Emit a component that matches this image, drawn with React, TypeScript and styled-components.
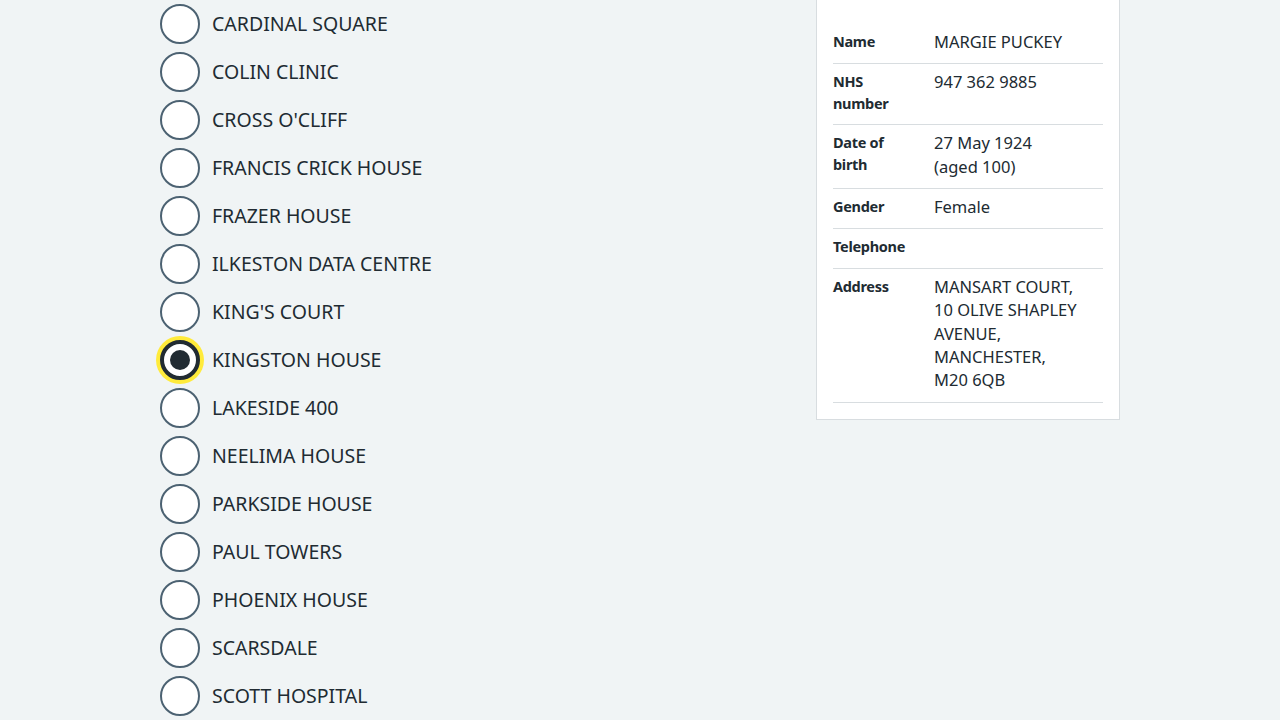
import React from "react";
import styled, { createGlobalStyle } from "styled-components";

const GlobalStyle = createGlobalStyle`
  html, body {
    margin: 0;
    padding: 0;
    background: #f0f4f5;
    color: #212b32;
    font-family: "Noto Sans", "Liberation Sans", Arial, sans-serif;
    overflow: hidden;
  }
  * { box-sizing: border-box; }
`;

const Page = styled.main`
  width: 960px;
  margin: 4px auto 0;
  display: grid;
  grid-template-columns: 640px 304px;
  column-gap: 16px;
  align-items: start;
`;

const RadioList = styled.div`
  display: flex;
  flex-direction: column;
  gap: 8px;
`;

const RadioItem = styled.label`
  display: flex;
  align-items: center;
  gap: 12px;
  height: 40px;
  cursor: pointer;
`;

const RadioCircle = styled.span<{ $checked?: boolean }>`
  position: relative;
  flex: none;
  width: 40px;
  height: 40px;
  border-radius: 50%;
  background: #ffffff;
  border: ${(p) => (p.$checked ? "4px solid #212b32" : "2px solid #4c6272")};
  box-shadow: ${(p) => (p.$checked ? "0 0 0 4px #ffeb3b" : "none")};

  &::after {
    content: "";
    display: ${(p) => (p.$checked ? "block" : "none")};
    position: absolute;
    left: 6px;
    top: 6px;
    width: 20px;
    height: 20px;
    border-radius: 50%;
    background: #212b32;
  }
`;

const RadioLabel = styled.span`
  font-size: 19.5px;
  line-height: 28px;
  margin-top: -1px;
  color: #212b32;
`;

const Card = styled.aside`
  margin-top: -48px;
  background: #ffffff;
  border: 1px solid #d8dde0;
  padding: 67px 16px 16px;
`;

const SummaryList = styled.dl`
  margin: 0;
  display: flex;
  flex-direction: column;
`;

const Row = styled.div`
  display: flex;
  border-bottom: 1px solid #d8dde0;
  padding: 6px 0 10px;
  min-height: 40px;
`;

const Key = styled.dt`
  flex: none;
  width: 101px;
  padding-right: 19px;
  font-size: 14.5px;
  font-weight: 700;
  letter-spacing: -0.3px;
  line-height: 22px;
  margin: 0;
`;

const Value = styled.dd`
  flex: 1;
  margin: 0;
  font-size: 16.5px;
  line-height: 23.3px;
`;

const sites = [
  "CARDINAL SQUARE",
  "COLIN CLINIC",
  "CROSS O'CLIFF",
  "FRANCIS CRICK HOUSE",
  "FRAZER HOUSE",
  "ILKESTON DATA CENTRE",
  "KING'S COURT",
  "KINGSTON HOUSE",
  "LAKESIDE 400",
  "NEELIMA HOUSE",
  "PARKSIDE HOUSE",
  "PAUL TOWERS",
  "PHOENIX HOUSE",
  "SCARSDALE",
  "SCOTT HOSPITAL",
];

const rows: { key: string; value: React.ReactNode }[] = [
  { key: "Name", value: "MARGIE PUCKEY" },
  { key: "NHS number", value: "947 362 9885" },
  {
    key: "Date of birth",
    value: (
      <>
        27 May 1924
        <br />
        (aged 100)
      </>
    ),
  },
  { key: "Gender", value: "Female" },
  { key: "Telephone", value: "" },
  {
    key: "Address",
    value: (
      <>
        MANSART COURT,
        <br />
        10 OLIVE SHAPLEY AVENUE,
        <br />
        MANCHESTER,
        <br />
        M20 6QB
      </>
    ),
  },
];

export default function App() {
  return (
    <>
      <GlobalStyle />
      <Page>
        <RadioList>
          {sites.map((s) => (
            <RadioItem key={s}>
              <RadioCircle $checked={s === "KINGSTON HOUSE"} />
              <RadioLabel>{s}</RadioLabel>
            </RadioItem>
          ))}
        </RadioList>
        <Card>
          <SummaryList>
            {rows.map((r) => (
              <Row key={r.key}>
                <Key>{r.key}</Key>
                <Value>{r.value}</Value>
              </Row>
            ))}
          </SummaryList>
        </Card>
      </Page>
    </>
  );
}
